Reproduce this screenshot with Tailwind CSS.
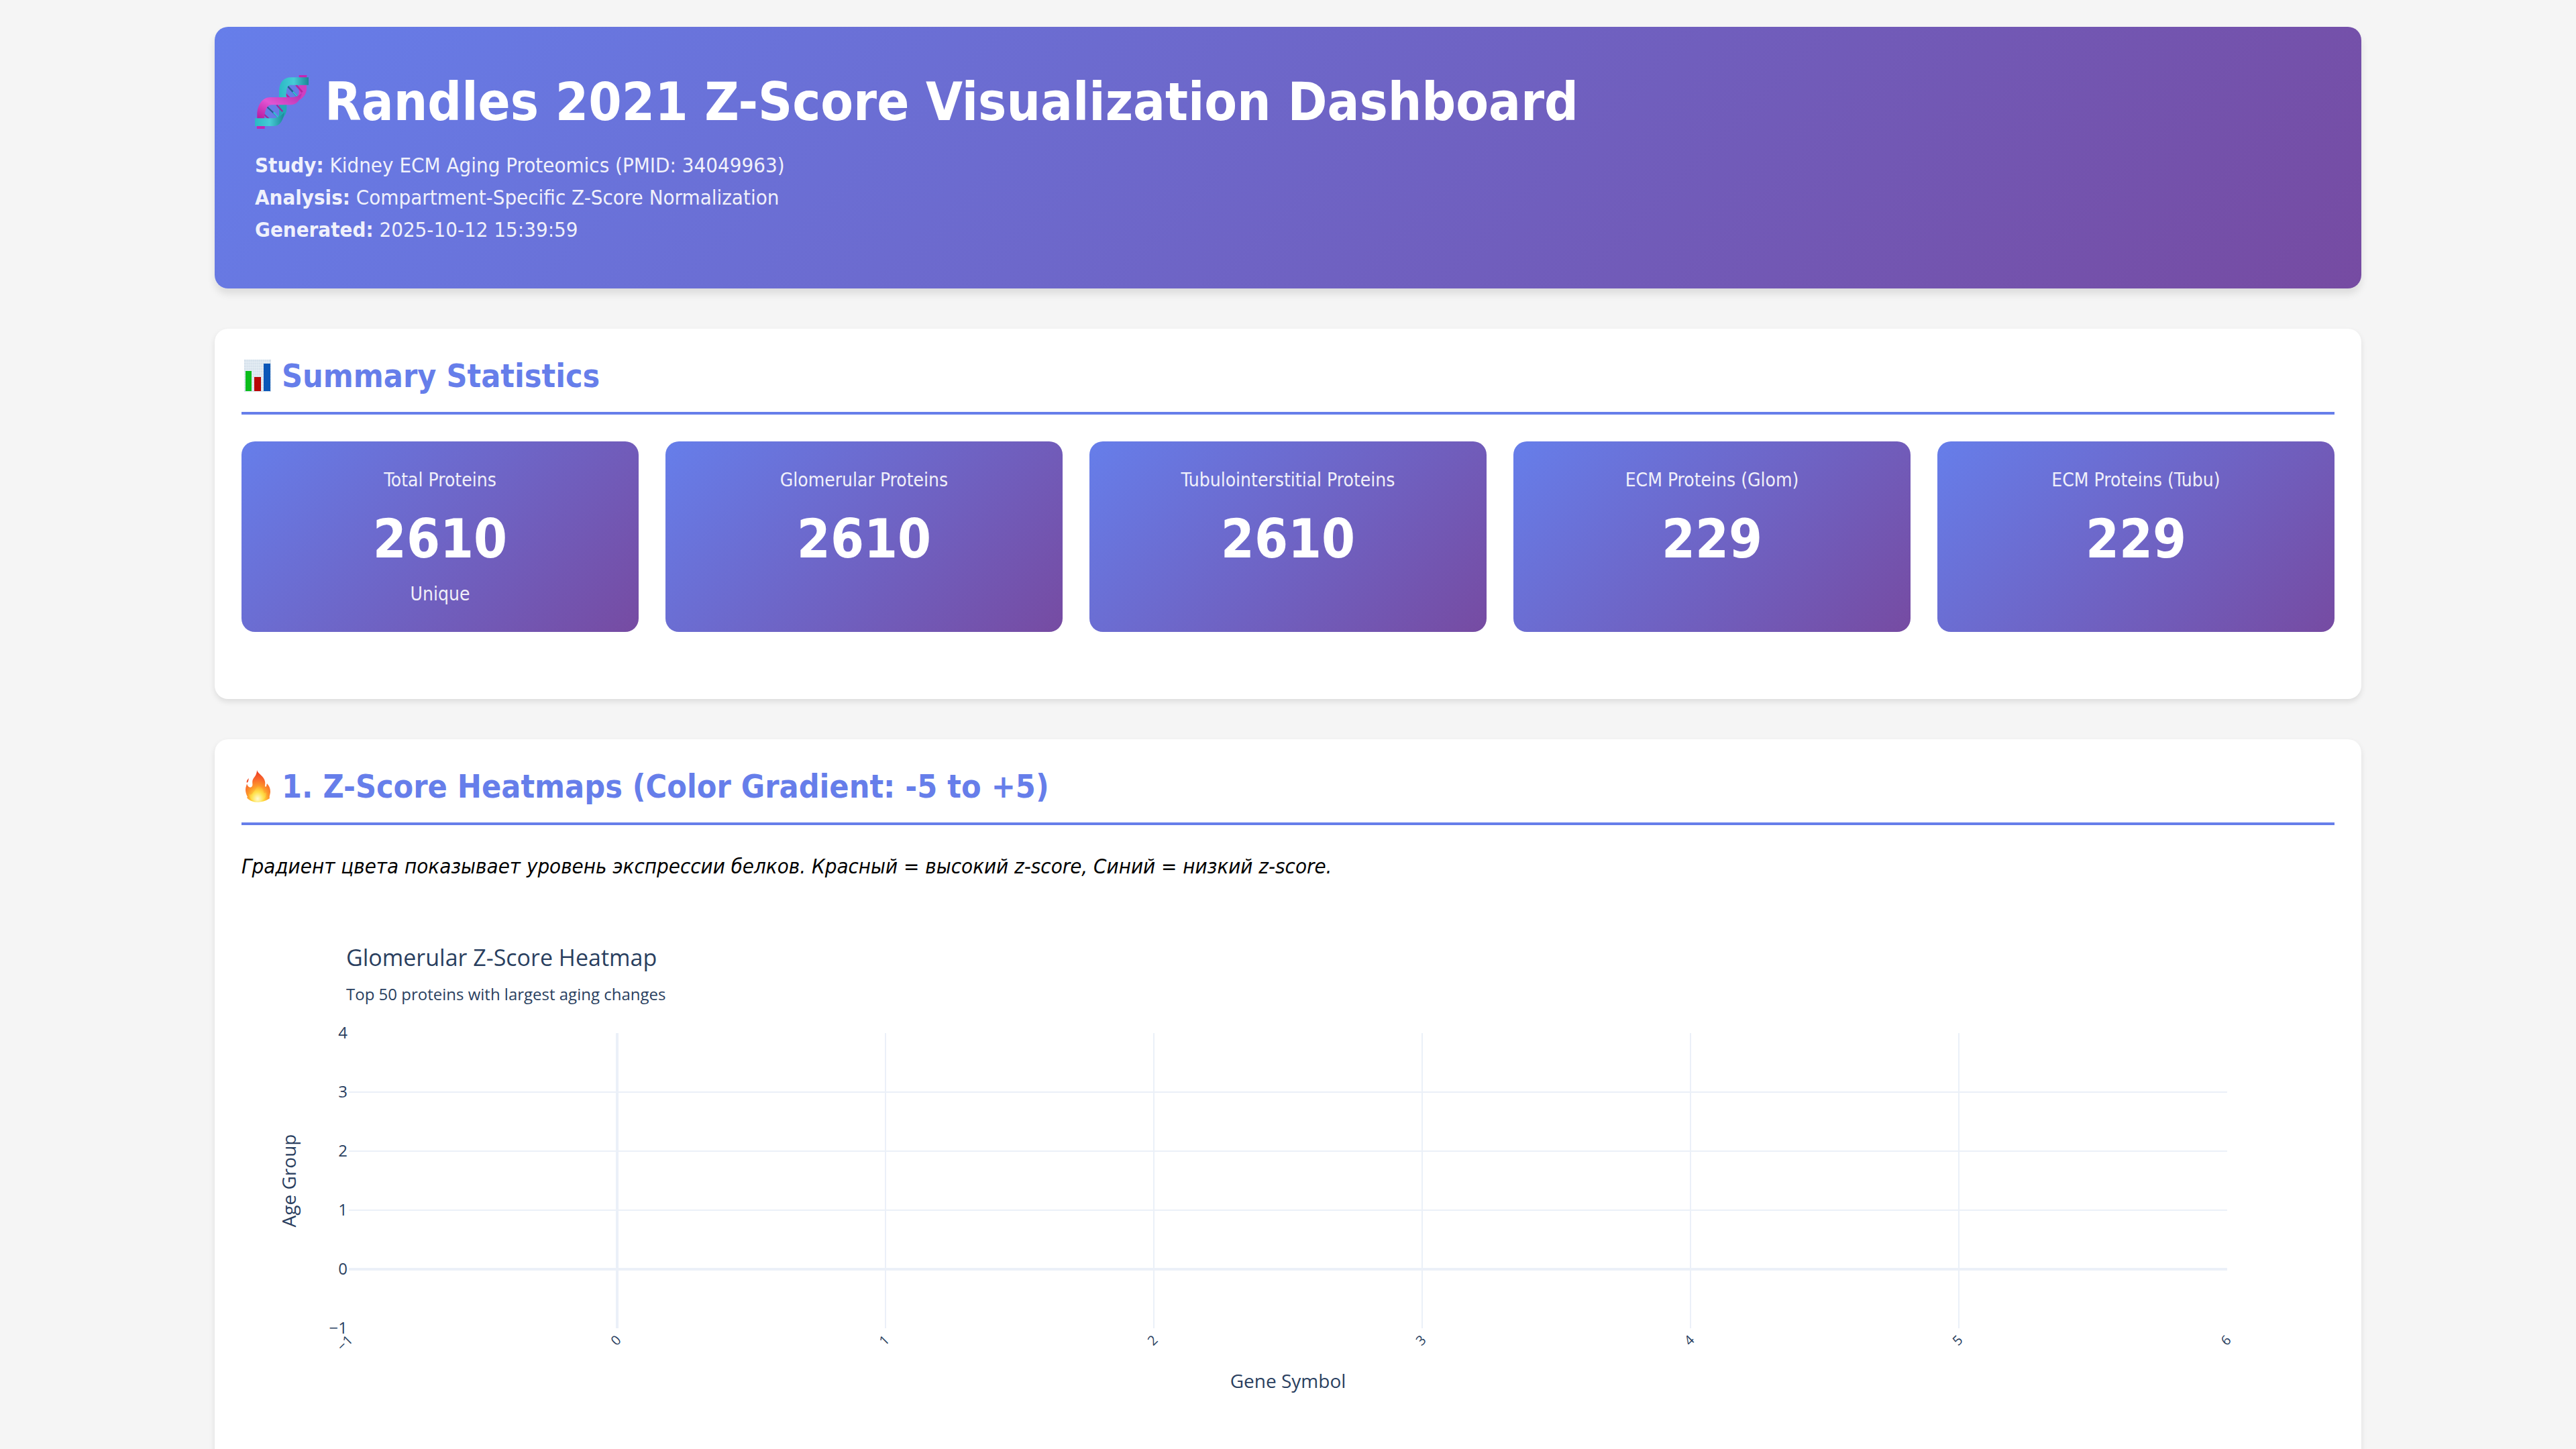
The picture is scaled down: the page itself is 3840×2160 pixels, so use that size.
<!DOCTYPE html>
<html lang="en">
<head>
<meta charset="utf-8">
<title>Randles 2021 Z-Score Visualization Dashboard</title>
<script src="https://cdn.jsdelivr.net/npm/@tailwindcss/browser@4"></script>
</head>
<body class="h-screen overflow-hidden bg-[#f5f5f5] p-10 font-['DejaVu_Sans_Condensed','DejaVu_Sans',sans-serif] text-[31px] text-black">
<div class="mx-auto flex max-w-[3200px] flex-col gap-[60px]">

  <header class="rounded-[20px] bg-[linear-gradient(135deg,#667eea_0%,#764ba2_100%)] px-[60px] pt-[60px] pb-16 text-white shadow-[0_8px_12px_rgba(0,0,0,0.1)]">
    <h1 class="mb-[18px] flex items-center gap-6 text-[79px] leading-[104px] font-bold">
      <svg class="size-20 shrink-0" viewBox="60 60 240 240" aria-hidden="true">
        <defs>
          <linearGradient id="teal" x1="0" y1="0" x2="1" y2="0"><stop offset="0" stop-color="#2bb9c4"/><stop offset=".5" stop-color="#46ccd6"/><stop offset="1" stop-color="#1a8795"/></linearGradient>
          <linearGradient id="pink" x1="0" y1="1" x2="1" y2="0"><stop offset="0" stop-color="#b5179e"/><stop offset=".45" stop-color="#e255d2"/><stop offset="1" stop-color="#b32fae"/></linearGradient>
        </defs>
        <path d="M257 60h35v12h-35zM69 286h35v14H69z" fill="#c424b4"/>
        <path d="M168 240V160H202V214C201 228 194 246 180 256L160 252Z" fill="#25a7b5"/>
        <path d="M257 104H291V124C290 142 280 158 262 170L240 162C252 156 257 148 257 136Z" fill="#cf3fc0"/>
        <path d="M110 198L165 249" stroke="#245e91" stroke-width="7"/>
        <path d="M143 226L165 249" stroke="#35bdd2" stroke-width="7"/>
        <path d="M157 193L184 223M90 226L126 258" stroke="#9a2a9c" stroke-width="7"/>
        <path d="M204 107L254 160" stroke="#245e91" stroke-width="8"/>
        <path d="M230 134L254 160" stroke="#35bdd2" stroke-width="7"/>
        <path d="M182 128L216 164M244 104L272 136" stroke="#b3249f" stroke-width="8"/>
        <path d="M70 254V232C72 192 94 159 128 159H226C246 158 258 150 270 140C264 172 246 193 218 193H134C112 194 103 222 102 254Z" fill="url(#pink)"/>
        <path d="M168 159V130C170 94 186 70 222 70H300V104H220C204 104 200 122 200 159Z" fill="url(#teal)"/>
        <path d="M60 253H142C164 252 180 240 192 226C186 262 174 288 144 288H60Z" fill="url(#teal)"/>
      </svg>
      <span>Randles 2021 Z-Score Visualization Dashboard</span>
    </h1>
    <div class="leading-[48px] opacity-90">
      <p><strong>Study:</strong> Kidney ECM Aging Proteomics (PMID: 34049963)</p>
      <p><strong>Analysis:</strong> Compartment-Specific Z-Score Normalization</p>
      <p><strong>Generated:</strong> 2025-10-12 15:39:59</p>
    </div>
  </header>

  <section class="rounded-[20px] bg-white px-10 pt-10 pb-[100px] shadow-[0_4px_8px_rgba(0,0,0,0.1)]">
    <h2 class="mb-10 flex items-center gap-3 border-b-4 border-[#667eea] pb-6 text-[48px] leading-[60px] font-bold text-[#667eea]">
      <svg class="size-12 shrink-0" viewBox="0 0 48 48" aria-hidden="true">
        <rect x="4" width="40" height="48" fill="#d3dfea"/>
        <path d="M7 0v48M10 0v48M13 0v48M16 0v48M19 0v48M22 0v48M25 0v48M28 0v48M31 0v48M34 0v48M37 0v48M40 0v48M4 4h40M4 8h40M4 12h40M4 16h40M4 20h40M4 24h40M4 28h40M4 32h40M4 36h40M4 40h40M4 44h40" stroke="#e8f0f6"/>
        <rect x="6" y="17" width="9" height="30" fill="#0bbd1b"/>
        <rect x="19" y="26" width="10" height="21" fill="#b90606"/>
        <rect x="33" y="6" width="10" height="41" fill="#0b57b8"/>
      </svg>
      <span>Summary Statistics</span>
    </h2>
    <div class="grid grid-cols-5 gap-10 text-center text-[28px] text-white">
      <div class="rounded-[20px] bg-[linear-gradient(135deg,#667eea_0%,#764ba2_100%)] px-10 pt-10 pb-[38px]">
        <div class="mb-5 leading-[36px] opacity-90">Total Proteins</div>
        <div class="mb-[14px] text-[80px] leading-[100px] font-bold">2610</div>
        <div class="leading-[36px] opacity-90">Unique</div>
      </div>
      <div class="rounded-[20px] bg-[linear-gradient(135deg,#667eea_0%,#764ba2_100%)] px-10 pt-10 pb-[38px]">
        <div class="mb-5 leading-[36px] opacity-90">Glomerular Proteins</div>
        <div class="text-[80px] leading-[100px] font-bold">2610</div>
      </div>
      <div class="rounded-[20px] bg-[linear-gradient(135deg,#667eea_0%,#764ba2_100%)] px-10 pt-10 pb-[38px]">
        <div class="mb-5 leading-[36px] opacity-90">Tubulointerstitial Proteins</div>
        <div class="text-[80px] leading-[100px] font-bold">2610</div>
      </div>
      <div class="rounded-[20px] bg-[linear-gradient(135deg,#667eea_0%,#764ba2_100%)] px-10 pt-10 pb-[38px]">
        <div class="mb-5 leading-[36px] opacity-90">ECM Proteins (Glom)</div>
        <div class="text-[80px] leading-[100px] font-bold">229</div>
      </div>
      <div class="rounded-[20px] bg-[linear-gradient(135deg,#667eea_0%,#764ba2_100%)] px-10 pt-10 pb-[38px]">
        <div class="mb-5 leading-[36px] opacity-90">ECM Proteins (Tubu)</div>
        <div class="text-[80px] leading-[100px] font-bold">229</div>
      </div>
    </div>
  </section>

  <section class="rounded-[20px] bg-white p-10 shadow-[0_4px_8px_rgba(0,0,0,0.1)]">
    <h2 class="mb-10 flex items-center gap-3 border-b-4 border-[#667eea] pb-6 text-[48px] leading-[60px] font-bold text-[#667eea]">
      <svg class="size-12 shrink-0" viewBox="0 0 48 48" aria-hidden="true">
        <defs>
          <radialGradient id="flame" cx=".5" cy=".92" r=".85"><stop offset="0" stop-color="#fff6a8"/><stop offset=".25" stop-color="#ffdc3c"/><stop offset=".5" stop-color="#fd9a2b"/><stop offset=".75" stop-color="#f9692d"/><stop offset="1" stop-color="#ee4323"/></radialGradient>
          <radialGradient id="core" cx=".5" cy=".85" r=".7"><stop offset="0" stop-color="#fffbd0"/><stop offset=".5" stop-color="#ffe04a"/><stop offset="1" stop-color="#ffb52e" stop-opacity="0"/></radialGradient>
        </defs>
        <path d="M23 0C24 5 34 9 35 17C36 21 34 24 36 25C38 24 37 22 38 20C41 23 43 27 43 32C43 36 41 39 42 42C38 45 33 47 25 48C17 48 11 45 8 41L9 40C7 36 6 33 6 29C6 25 8 22 8 20C9 24 12 27 15 25C18 23 15 18 17 14C19 10 23 7 23 0Z" fill="url(#flame)"/>
        <path d="M11 12C10 15 11 17 8 19C7 16 9 14 11 12Z" fill="#f04a25"/>
        <path d="M25 18C26 25 33 26 33 33C34 35 36 34 37 33C38 40 33 46 25 47C16 47 11 42 11 35C13 37 15 37 17 34C20 30 24 26 25 18Z" fill="url(#core)"/>
      </svg>
      <span>1. Z-Score Heatmaps (Color Gradient: -5 to +5)</span>
    </h2>
    <p class="leading-[42px] italic" lang="ru">Градиент цвета показывает уровень экспрессии белков. Красный = высокий z-score, Синий = низкий z-score.</p>

    <svg class="mt-7 block w-full font-['Open_Sans',sans-serif]" viewBox="0 0 3120 900" role="img" aria-label="Glomerular Z-Score Heatmap">
      <g stroke="#ebf0f8" stroke-width="2">
        <path d="M960 200V640M1360 200V640M1760 200V640M2160 200V640M2560 200V640"/>
        <path d="M160 288H2960M160 376H2960M160 464H2960"/>
        <path d="M560 200V640M160 552H2960" stroke-width="4"/>
      </g>
      <g fill="#2a3f5f">
        <text x="156" y="100" font-size="34">Glomerular Z-Score Heatmap</text>
        <text x="156" y="151" font-size="24">Top 50 proteins with largest aging changes</text>
        <g font-size="24" text-anchor="end">
          <text x="158" y="208">4</text>
          <text x="158" y="296">3</text>
          <text x="158" y="384">2</text>
          <text x="158" y="472">1</text>
          <text x="158" y="560">0</text>
          <text x="158" y="648">−1</text>
        </g>
        <g font-size="20" text-anchor="end">
          <text transform="translate(167 659) rotate(-45)">−1</text>
          <text transform="translate(567 659) rotate(-45)">0</text>
          <text transform="translate(967 659) rotate(-45)">1</text>
          <text transform="translate(1367 659) rotate(-45)">2</text>
          <text transform="translate(1767 659) rotate(-45)">3</text>
          <text transform="translate(2167 659) rotate(-45)">4</text>
          <text transform="translate(2567 659) rotate(-45)">5</text>
          <text transform="translate(2967 659) rotate(-45)">6</text>
        </g>
        <g font-size="28" text-anchor="middle">
          <text transform="translate(81 420) rotate(-90)">Age Group</text>
          <text x="1560" y="729">Gene Symbol</text>
        </g>
      </g>
    </svg>
  </section>
</div>
</body>
</html>
